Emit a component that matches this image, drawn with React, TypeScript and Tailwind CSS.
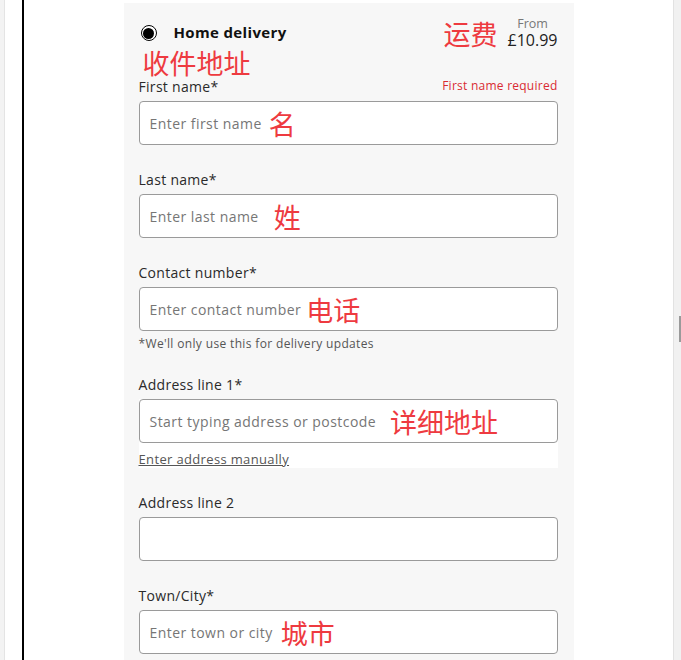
import React from 'react';

const fieldFont = { fontFamily: '"Open Sans", "Noto Sans CJK SC", sans-serif' };

type Field = {
    label: string;
    placeholder?: string;
    note?: string;
    noteGap?: string;
    error?: string;
};

const Note = ({ text, gap }: { text: string; gap: string }) => (
    <span
        className={`${gap} text-[27px] leading-none text-[#ee3a40]`}
        style={{ fontFamily: '"Noto Sans CJK SC", sans-serif' }}
    >
        {text}
    </span>
);

const Input = ({ field }: { field: Field }) => (
    <div className="h-[44px] flex items-center px-[10px] bg-white border border-[#9a9a9a] rounded-[4px]">
        {field.placeholder && (
            <span className="text-[14px] tracking-[0.45px] text-[#767676]">{field.placeholder}</span>
        )}
        {field.note && <Note text={field.note} gap={field.noteGap ?? 'ml-2'} />}
    </div>
);

const Label = ({ field }: { field: Field }) => (
    <div className="h-[18px] mb-[6px] flex items-center justify-between">
        <span className="text-[14px] tracking-[0.3px] text-[#2a2a2a]">{field.label}</span>
        {field.error && <span className="text-[12px] tracking-[0.25px] text-[#d92b33]">{field.error}</span>}
    </div>
);

const App = () => {
    return (
        <div className="w-[681px] h-[660px] overflow-hidden flex bg-white" style={fieldFont}>
            {/* left frame */}
            <div className="w-[5px] h-full bg-[#f3f3f3] border-r border-[#e4e4e4]" />
            <div className="w-[17px] h-full bg-white" />
            <div className="w-[2px] h-full bg-black" />

            {/* main */}
            <main className="flex-1 flex justify-center">
                <div className="w-[450px] mt-[3px] bg-[#f7f7f7] pt-[15px] pl-[15px] pr-[16px]">
                    {/* Header */}
                    <div className="h-[30px] flex items-center justify-between">
                        <div className="flex items-center gap-[17px] pl-[2px]">
                            <div className="w-[16px] h-[16px] rounded-full border-[1.5px] border-black bg-white p-[1.5px]">
                                <div className="w-full h-full rounded-full bg-black" />
                            </div>
                            <span className="-mt-[2px] text-[15px] tracking-[0.35px] font-bold text-[#111]">Home delivery</span>
                        </div>
                        <div className="flex items-center gap-[10px]">
                            <Note text="运费" gap="" />
                            <div className="flex flex-col items-center">
                                <span className="text-[12.5px] leading-[15px] text-[#777]">From</span>
                                <span className="text-[16px] leading-[19px] text-[#222]">£10.99</span>
                            </div>
                        </div>
                    </div>

                    <div
                        className="h-[29px] flex items-center pl-[4px] text-[27px] leading-none text-[#ee3a40]"
                        style={{ fontFamily: '"Noto Sans CJK SC", sans-serif' }}
                    >
                        收件地址
                    </div>

                    {/* First name */}
                    <Label field={{ label: 'First name*', error: 'First name required' }} />
                    <Input field={{ label: '', placeholder: 'Enter first name', note: '名', noteGap: 'ml-[7px]' }} />

                    {/* Last name */}
                    <div className="mt-[25px]">
                        <Label field={{ label: 'Last name*' }} />
                        <Input field={{ label: '', placeholder: 'Enter last name', note: '姓', noteGap: 'ml-[15px]' }} />
                    </div>

                    {/* Contact */}
                    <div className="mt-[25px]">
                        <Label field={{ label: 'Contact number*' }} />
                        <Input field={{ label: '', placeholder: 'Enter contact number', note: '电话', noteGap: 'ml-[5px]' }} />
                        <p className="mt-[6px] text-[12px] tracking-[0.35px] leading-[14px] text-[#555]">
                            *We'll only use this for delivery updates
                        </p>
                    </div>

                    {/* Address line 1 */}
                    <div className="mt-[24px]">
                        <Label field={{ label: 'Address line 1*' }} />
                        <div className="bg-white">
                            <Input field={{ label: '', placeholder: 'Start typing address or postcode', note: '详细地址', noteGap: 'ml-[14px]' }} />
                            <div className="h-[25px] pt-[3px]">
                                <a className="text-[13px] tracking-[0.35px] leading-[16px] text-[#555] underline">Enter address manually</a>
                            </div>
                        </div>
                    </div>

                    {/* Address line 2 */}
                    <div className="mt-[25px]">
                        <Label field={{ label: 'Address line 2' }} />
                        <Input field={{ label: '' }} />
                    </div>

                    {/* Town */}
                    <div className="mt-[25px]">
                        <Label field={{ label: 'Town/City*' }} />
                        <Input field={{ label: '', placeholder: 'Enter town or city', note: '城市', noteGap: 'ml-[8px]' }} />
                    </div>
                </div>
            </main>

            {/* right frame / scrollbar */}
            <div className="w-[8px] h-full bg-[#f1f1f1] border-l border-[#e2e2e2] pt-[316px] flex flex-col items-end">
                <div className="w-[2px] h-[26px] bg-[#9a9a9a]" />
            </div>
        </div>
    );
};

export default App;
